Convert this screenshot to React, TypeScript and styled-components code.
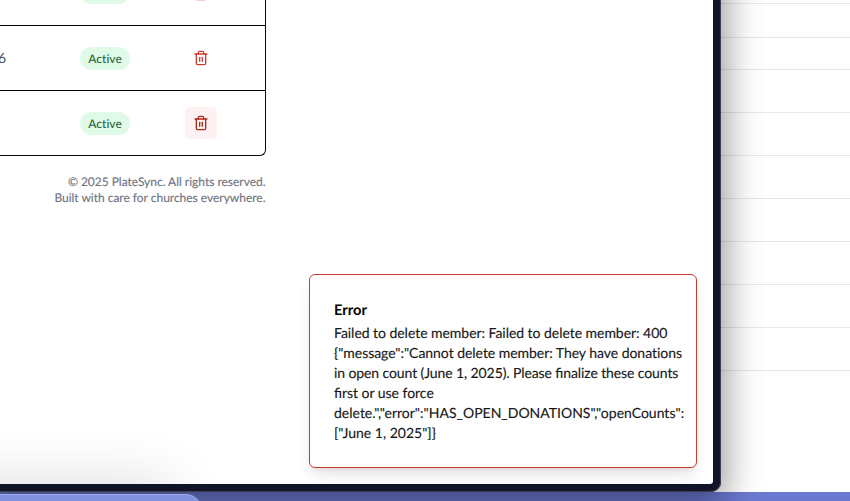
import React from "react";
import styled, { createGlobalStyle } from "styled-components";
import { Trash2 } from "lucide-react";

const GlobalStyle = createGlobalStyle`
  *, *::before, *::after { box-sizing: border-box; }
  body {
    margin: 0;
    font-family: Lato, "Liberation Sans", sans-serif;
    text-rendering: geometricPrecision;
    overflow: hidden;
  }
`;

const Desktop = styled.main`
  position: relative;
  width: 850px;
  height: 501px;
  overflow: hidden;
  background: #6b79d1;
`;

const BackSheet = styled.section`
  height: 492px;
  padding-left: 600px;
  background: #fff;
`;

const SheetRow = styled.div<{ $height: number }>`
  height: ${(p) => p.$height}px;
  border-bottom: 1px solid #e7e7e7;
`;

const Window = styled.section`
  position: absolute;
  left: -20px;
  top: -40px;
  width: 741px;
  height: 532px;
  border: 8px solid #111426;
  border-top: 0;
  border-radius: 0 0 10px 10px;
  background: #111426;
  box-shadow: 0 9px 36px 4px rgba(0, 0, 0, 0.42);
  &::after {
    content: "";
    position: absolute;
    inset: 0 -8px -8px -8px;
    border: solid #3c3e50;
    border-width: 0 1px 1px 0;
    border-radius: 0 0 10px 0;
  }
`;

const Page = styled.div`
  position: relative;
  height: 524px;
  padding: 40px 0 0 12px;
  overflow: hidden;
  border-radius: 0 0 3px 0;
  background: #fff;
`;

const Members = styled.div`
  width: 266px;
  height: 156px;
  display: flex;
  flex-direction: column;
  justify-content: flex-end;
  overflow: hidden;
  border: solid #09090b;
  border-width: 0 1px 1px 0;
  border-radius: 0 0 6px 0;
`;

const MemberRow = styled.div`
  flex: none;
  height: 65px;
  display: grid;
  grid-template-columns: 80px 105px 1fr;
  align-items: center;
  & + & { border-top: 1px solid #000; }
`;

const NumberCell = styled.span`
  width: 6px;
  display: flex;
  justify-content: flex-end;
  font-size: 14px;
  line-height: 20px;
  color: #4b5563;
`;

const Badge = styled.span`
  justify-self: start;
  width: 50px;
  height: 23px;
  padding-top: 1px;
  display: flex;
  align-items: center;
  justify-content: center;
  border-radius: 12px;
  background: #e0fae8;
  color: #2b6539;
  font-size: 12px;
  font-weight: 500;
  line-height: 16px;
  letter-spacing: 0.05px;
`;

const DeleteButton = styled.button<{ $hovered?: boolean }>`
  width: 32px;
  height: 32px;
  display: grid;
  place-items: center;
  padding: 0;
  border: 0;
  border-radius: 5px;
  background: ${(p) => (p.$hovered ? "#fdf2f1" : "transparent")};
  color: ${(p) => (p.$hovered ? "#ae2b20" : "#cf3c2e")};
`;

const Copyright = styled.footer`
  width: 265.5px;
  padding-top: 18px;
  text-align: right;
  font-size: 12px;
  line-height: 16px;
  letter-spacing: -0.02px;
  color: #6f7482;
  -webkit-text-stroke: 0.15px #6f7482;
  white-space: nowrap;
`;

const WindowGlow = styled.div`
  position: absolute;
  left: -80px;
  bottom: -30px;
  width: 260px;
  height: 20px;
  border-radius: 20px;
  box-shadow: 0 0 60px 6px rgba(0, 0, 0, 0.2);
`;

const Toast = styled.aside`
  position: absolute;
  right: 16px;
  bottom: 16px;
  width: 388px;
  height: 194px;
  padding: 25px 0 0 24px;
  border: 1px solid #cb3c2e;
  border-radius: 6px;
  background: #fff;
  box-shadow: 0 10px 15px -3px rgba(0, 0, 0, 0.1), 0 4px 6px -4px rgba(0, 0, 0, 0.12);
`;

const ToastTitle = styled.h2`
  margin: 0 0 3px;
  color: #000;
  font-size: 14.7px;
  font-weight: 700;
  line-height: 20px;
`;

const ToastText = styled.p`
  width: 352px;
  margin: 0;
  color: #171717;
  -webkit-text-stroke: 0.15px #171717;
  font-size: 14px;
  line-height: 20px;
`;

const ToastLine = styled.span<{ $tracking: number }>`
  display: block;
  white-space: pre;
  letter-spacing: ${(p) => p.$tracking}px;
  font-feature-settings: "liga" ${(p) => (p.$tracking === -0.04 ? 0 : 1)};
`;

const FrontWindow = styled.div`
  position: absolute;
  left: -30px;
  top: 494px;
  width: 233px;
  height: 40px;
  border-top: 1px solid #a0abe9;
  border-radius: 0 18px 0 0;
  background: #8190df;
`;

const SHEET_ROWS = [4, 34, 32, 43, 43, 43, 43, 43, 43, 43];
const MEMBERS = [{ phone: "" }, { phone: "6" }, { phone: "", hovered: true }];
const MESSAGE = [
  { text: "Failed to delete member: Failed to delete member: 400", tracking: -0.04 },
  { text: '{"message":"Cannot delete member: They have donations', tracking: -0.04 },
  { text: "in open count (June 1, 2025). Please finalize these counts", tracking: -0.1 },
  { text: "first or use force", tracking: -0.03 },
  { text: 'delete.","error":"HAS_OPEN_DONATIONS","openCounts":', tracking: 0 },
  { text: '["June 1, 2025"]}', tracking: 0 },
];

export default function App() {
  return (
    <>
      <GlobalStyle />
      <Desktop>
        <BackSheet>
          {SHEET_ROWS.map((height, i) => <SheetRow key={i} $height={height} />)}
        </BackSheet>
        <Window>
          <Page>
            <Members>
              {MEMBERS.map((member, i) => (
                <MemberRow key={i}>
                  <NumberCell>{member.phone}</NumberCell>
                  <Badge>Active</Badge>
                  <DeleteButton $hovered={member.hovered} aria-label="Delete member">
                    <Trash2 size={16} />
                  </DeleteButton>
                </MemberRow>
              ))}
            </Members>
            <Copyright>
              © 2025 PlateSync. All rights reserved.<br />
              Built with care for churches everywhere.
            </Copyright>
            <WindowGlow />
            <Toast role="alert">
              <ToastTitle>Error</ToastTitle>
              <ToastText>
                {MESSAGE.map((line) => (
                  <ToastLine key={line.text} $tracking={line.tracking}>{line.text}</ToastLine>
                ))}
              </ToastText>
            </Toast>
          </Page>
        </Window>
        <FrontWindow />
      </Desktop>
    </>
  );
}
